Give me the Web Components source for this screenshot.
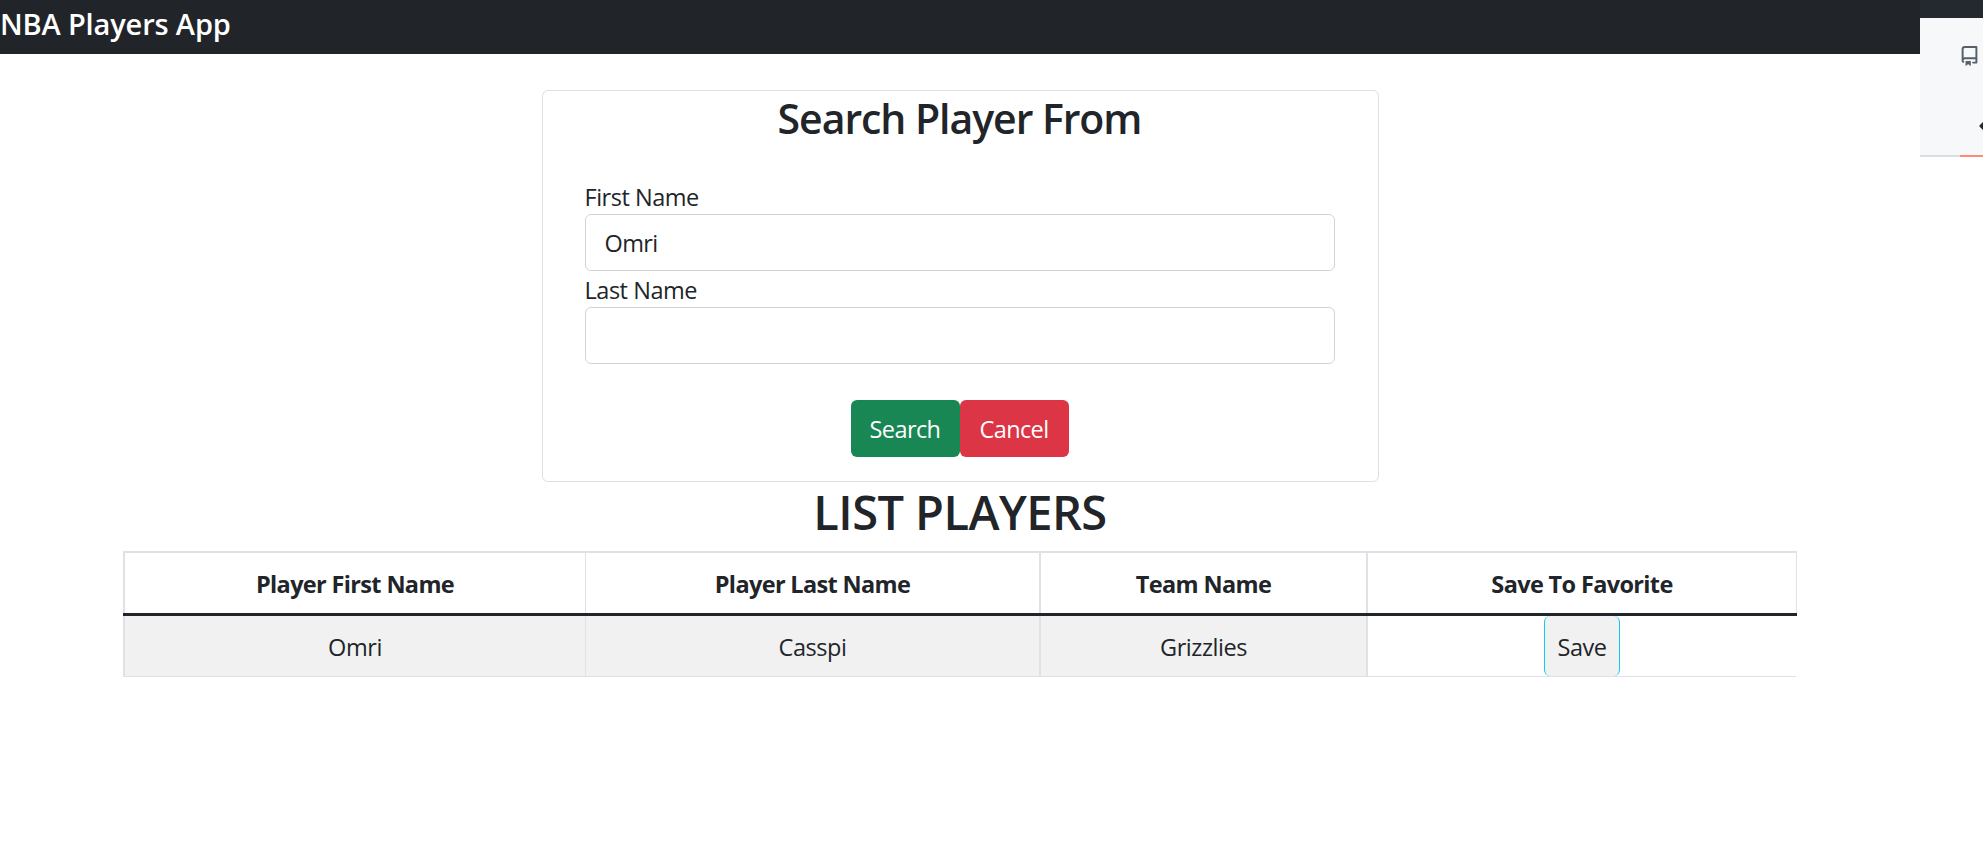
<!DOCTYPE html>
<html lang="en"><head><meta charset="utf-8"><title>NBA Players App</title>
<style>
html,body{margin:0;height:100%;overflow:hidden;background:#fff}
body{font-family:"Open Sans","Noto Sans",sans-serif;font-size:24px;line-height:36px;color:#212529}
</style></head><body>
<players-app></players-app>
<script>
const define=(name,html)=>{
  const t=document.createElement('template');t.innerHTML=html;
  customElements.define(name,class extends HTMLElement{
    constructor(){super();this.attachShadow({mode:'open'}).append(t.content.cloneNode(true));}
  });
};
define('nav-bar',`<style>:host{display:block;box-sizing:border-box;height:54px;padding:6px 0 0 0;background:#212529;color:#fff;font-size:29px;font-weight:600;letter-spacing:-.15px;white-space:nowrap}</style><slot></slot>`);
define('form-field',`<style>:host{display:block;height:93px}
label{display:block;height:36px;line-height:38px;letter-spacing:-.47px;font-size:23.5px}
div{box-sizing:border-box;height:57px;border:1px solid #ced4da;border-radius:6px;padding:9px 19px;line-height:39px;font-size:23.5px;letter-spacing:-.6px}</style>
<label><slot name="label"></slot></label><div><slot></slot></div>`);
define('action-button',`<style>:host{display:block;box-sizing:border-box;width:109px;height:57px;border-radius:6px;background:var(--bg);color:#fff;text-align:center;line-height:59px;font-size:23.5px;letter-spacing:-.6px}</style><slot></slot>`);
define('search-card',`<style>:host{display:block;box-sizing:border-box;width:837px;height:392px;margin:36px auto 0;border:1px solid #dfdfdf;border-radius:6px;padding:0 43px 0 42px}
h2{margin:0;height:87px;line-height:54px;font-size:41px;font-weight:600;text-align:center;letter-spacing:-1.05px;white-space:nowrap}
.actions{display:flex;justify-content:center;margin-top:36px}</style>
<h2>Search Player From</h2>
<form-field><span slot="label">First Name</span>Omri</form-field>
<form-field><span slot="label">Last Name</span></form-field>
<div class="actions"><action-button style="--bg:#198754">Search</action-button><action-button style="--bg:#dc3545">Cancel</action-button></div>`);
define('players-table',`<style>:host{display:block;width:1674px;margin:0 auto}
.row{display:grid;grid-template-columns:462px 454px 327px 431px;grid-template-rows:100%;text-align:center;font-size:23.5px;letter-spacing:-.45px}
.row>*{box-sizing:border-box;border-left:2px solid #dee2e6}
.row>:nth-child(2){border-left-width:1px}
.head{height:62px;box-sizing:border-box;border-top:2px solid #dee2e6;line-height:63px;font-weight:700;letter-spacing:-.65px}
.head>:last-child{border-right:1px solid #dee2e6}
.line{height:3px;background:#212529}
.body{height:61px;box-sizing:border-box;border-bottom:1px solid #dee2e6;line-height:63px;margin-right:1px;grid-template-columns:462px 454px 327px 430px}
.body>*{background:#f1f1f1}
.body>:last-child{background:#fff;display:flex;justify-content:center}
.save{box-sizing:border-box;width:76px;height:60px;border:solid #0dcaf0;border-width:0 1px;border-radius:6px;background:#f1f1f1}
</style>
<div class="row head"><div>Player First Name</div><div>Player Last Name</div><div>Team Name</div><div>Save To Favorite</div></div>
<div class="line"></div>
<div class="row body"><div>Omri</div><div>Casspi</div><div>Grizzlies</div><div><div class="save">Save</div></div></div>`);
define('side-panel',`<style>:host{display:flex;flex-direction:column;width:63px;height:157px;background:#f6f8fa;overflow:hidden}
.top{height:18px;flex:none;background:#24292f}
.icons{flex:1;display:flex;flex-direction:column;padding:28px 0 0 39px}
svg{display:block;flex:none}
.repo{width:21px;height:20px}.code{width:20px;height:20px;margin:50px 0 0 20px}
.rule{height:2px;flex:none;background:linear-gradient(90deg,#d8dee4 40px,#fd8c73 40px)}</style>
<div class="top"></div><div class="icons">
<svg class="repo" viewBox="0 0 16 16" preserveAspectRatio="none" fill="#57606a"><path fill-rule="evenodd" d="M2 2.5A2.5 2.5 0 014.5 0h8.75a.75.75 0 01.75.75v12.5a.75.75 0 01-.75.75h-2.5a.75.75 0 110-1.5h1.75v-2h-8a1 1 0 00-.714 1.7.75.75 0 01-1.072 1.05A2.495 2.495 0 012 11.5v-9zm10.5-1V9h-8c-.356 0-.694.074-1 .208V2.5a1 1 0 011-1h8zM5 12.25v3.25a.25.25 0 00.4.2l1.45-1.087a.25.25 0 01.3 0L8.6 15.7a.25.25 0 00.4-.2v-3.25a.25.25 0 00-.25-.25h-3.5a.25.25 0 00-.25.25z"/></svg>
<svg class="code" viewBox="0 0 20 20" fill="none" stroke="#24292f" stroke-width="3" stroke-linejoin="round"><path d="M7 5L2 10L7 15"/></svg>
</div><div class="rule"></div>`);
define('players-app',`<style>:host{display:flex;align-items:flex-start;width:1983px;height:856px}
main{width:1920px;flex:none}
h1{margin:0;height:69px;line-height:60px;text-align:center;font-size:47px;font-weight:600;letter-spacing:-.55px;white-space:nowrap}</style>
<main><nav-bar>NBA Players App</nav-bar><search-card></search-card><h1>LIST PLAYERS</h1><players-table></players-table></main><side-panel></side-panel>`);
</script></body></html>
